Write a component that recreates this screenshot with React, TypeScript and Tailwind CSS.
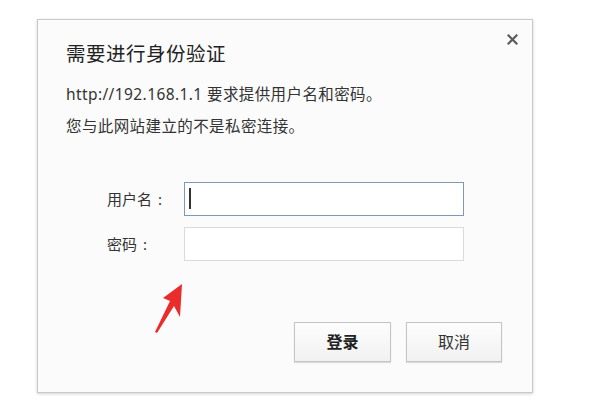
export default function App() {
  const font = { fontFamily: '"Noto Sans", "Noto Sans CJK SC", sans-serif' };

  return (
    <div className="h-[400px] w-[600px] overflow-hidden bg-white" style={font}>
      <div className="relative ml-[37px] mt-[19px] h-[374px] w-[496px] border border-[#c9c9c9] bg-[#fbfbfb] shadow-[0_1px_3px_rgba(0,0,0,0.18)]">
        {/* Close */}
        <button className="absolute right-[14px] top-[13px] flex h-[12px] w-[12px] items-center justify-center">
          <svg width="11" height="11" viewBox="0 0 11 11">
            <path d="M1.5 1.5 L9.5 9.5 M9.5 1.5 L1.5 9.5" stroke="#5c5c5c" strokeWidth="2.2" strokeLinecap="square" />
          </svg>
        </button>

        <div className="pl-[28px] pt-[22px]">
          <h1 className="text-[19.5px] leading-[24px] tracking-[0.5px] text-[#222]">需要进行身份验证</h1>
          <p className="mt-[12px] text-[15.5px] leading-[32px] tracking-[0.4px] text-[#333]">
            http://192.168.1.1 要求提供用户名和密码。
          </p>
          <p className="text-[15.5px] leading-[32px] tracking-[0.4px] text-[#333]">您与此网站建立的不是私密连接。</p>
        </div>

        {/* Form */}
        <div className="mt-[40px] flex flex-col gap-[11px] pl-[69px]">
          <div className="flex items-center">
            <span className="w-[77px] text-[15px] text-[#333]">
              用户名<span className="ml-[6px]">:</span>
            </span>
            <div className="relative h-[34px] w-[280px] border border-[#7d99b8] bg-white">
              <div className="absolute left-[4px] top-[5px] h-[21px] w-[1.5px] bg-[#333]" />
            </div>
          </div>
          <div className="flex items-center">
            <span className="w-[77px] text-[15px] text-[#333]">
              密码<span className="ml-[6px]">:</span>
            </span>
            <div className="h-[34px] w-[280px] border border-[#dadada] bg-white" />
          </div>
        </div>

        {/* Red annotation arrow */}
        <svg className="absolute left-[112px] top-[260px]" width="40" height="60" viewBox="0 0 40 60">
          <polygon points="32,4 13,18 20,21 5,52 7,53 24,26 30,37" fill="#ea2c2c" />
        </svg>

        {/* Buttons */}
        <div className="mt-[61px] flex justify-end gap-[15px] pr-[30px]">
          <button className="h-[40px] w-[97px] border border-[#c4c4c4] bg-gradient-to-b from-[#fdfdfd] to-[#f1f1f1] text-[16px] font-bold text-[#222] shadow-[0_1px_1px_rgba(0,0,0,0.12)]">
            登录
          </button>
          <button className="h-[40px] w-[96px] border border-[#c4c4c4] bg-gradient-to-b from-[#fdfdfd] to-[#f1f1f1] text-[16px] text-[#333] shadow-[0_1px_1px_rgba(0,0,0,0.12)]">
            取消
          </button>
        </div>
      </div>
    </div>
  );
}
